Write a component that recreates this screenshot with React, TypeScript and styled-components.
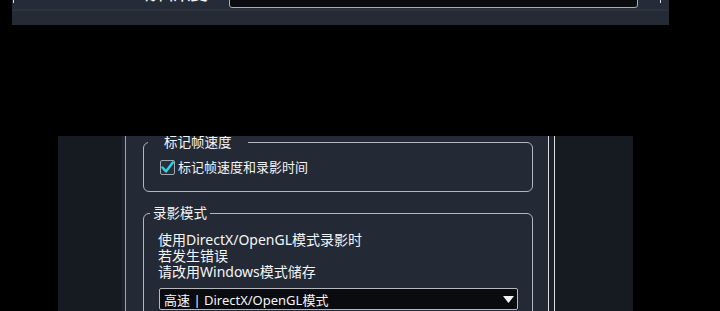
import React from "react";
import styled, { createGlobalStyle } from "styled-components";

const GlobalStyle = createGlobalStyle`
  html, body { margin: 0; padding: 0; background: #000; overflow: hidden; }
  #root { height: 311px; overflow: hidden; }
  * { box-sizing: border-box; }
`;

const FONT = `"Noto Sans", "Noto Sans CJK SC", sans-serif`;

const Page = styled.div`
  width: 720px;
  height: 311px;
  background: #000;
  font-family: ${FONT};
  color: #f1f3f5;
`;

const TopPanel = styled.div`
  margin-left: 12px;
  width: 657px;
  height: 25px;
  background: linear-gradient(#262c37 0 9px, #2c323d 9px 11px, #252b35 11px 100%);
  overflow: hidden;
`;

const TopFrame = styled.div`
  margin: 0 8px 0 1px;
  height: 100%;
  border-left: 1px solid #d6dae0;
  border-right: 1px solid #d6dae0;
`;

const TopRow = styled.div`
  display: flex;
  align-items: center;
  gap: 21px;
  height: 30px;
  margin-top: -22px;
  padding-left: 129px;
`;

const TopLabel = styled.div`
  width: 65px;
  font-size: 21px;
  line-height: 24px;
  text-align: right;
  color: #f4f6f8;
  margin-top: -4px;
`;

const TopInput = styled.div`
  width: 409px;
  height: 30px;
  background: #0a0c0f;
  border: 1px solid #a9aeb5;
  border-radius: 3px;
  font-size: 15px;
  line-height: 20px;
  padding: 0 0 0 10px;
  color: #e8e8e8;
  white-space: pre;
`;

const Bottom = styled.div`
  display: flex;
  margin: 111px 0 0 58px;
  width: 575px;
  height: 175px;
`;

const SideStrip = styled.div<{ $w: number }>`
  width: ${(p) => p.$w}px;
  flex: none;
  background: #161b22;
`;

const LeftEdge = styled.div`
  width: 3px;
  flex: none;
  background: #1d2430;
`;

const Content = styled.div`
  width: 423px;
  flex: none;
  background: #232935;
  border-left: 1px solid #9aa1a9;
  overflow: hidden;
  padding: 0 15px 0 17px;
`;

const Divider = styled.div`
  width: 7px;
  flex: none;
  background: #1a1f28;
  border-left: 1px solid #d9dde2;
  border-right: 1px solid #d9dde2;
`;

const Group = styled.fieldset<{ $pl: number; $mt: number; $pb: number }>`
  margin: ${(p) => p.$mt}px 0 0 0;
  padding: 0 14px ${(p) => p.$pb}px ${(p) => p.$pl}px;
  border: 1px solid #b1b7bf;
  border-radius: 6px;
  min-width: 0;
`;

const Legend = styled.legend<{ $ml: number; $px: number }>`
  margin-left: ${(p) => p.$ml}px;
  padding: 0 ${(p) => p.$px}px;
  font-size: 13.5px;
  line-height: 16px;
  height: 16px;
  color: #f3f5f7;
`;

const CheckRow = styled.label`
  display: flex;
  align-items: center;
  gap: 3px;
  margin-top: 9px;
  height: 16px;
  font-size: 13px;
  line-height: 16px;
`;

const Box = styled.span`
  width: 15px;
  height: 15px;
  flex: none;
  border: 1px solid #a2a8b0;
  border-radius: 2px;
  background: #2a303a;
  display: flex;
  align-items: center;
  justify-content: center;
`;

const Notes = styled.div`
  margin-top: 11px;
  font-size: 14px;
  line-height: 16px;
  color: #f4f6f8;
`;

const Select = styled.div`
  display: flex;
  align-items: center;
  justify-content: space-between;
  margin-top: 8px;
  margin-left: 1px;
  width: 359px;
  height: 22px;
  background: #090b0e;
  border: 1px solid #b4b9c0;
  border-radius: 2px;
  padding: 0 3px 0 4px;
  font-size: 13px;
  color: #f4f6f8;
`;

export default function App() {
  return (
    <Page>
      <GlobalStyle />
      <TopPanel>
        <TopFrame>
          <TopRow>
            <TopLabel>解析度</TopLabel>
            <TopInput>{"1920x1080 | (1920x1080 推荐)"}</TopInput>
          </TopRow>
        </TopFrame>
      </TopPanel>
      <Bottom>
        <SideStrip $w={64} />
        <LeftEdge />
        <Content>
          <Group $pl={16} $mt={-2} $pb={16}>
            <Legend $ml={-12} $px={16}>标记帧速度</Legend>
            <CheckRow>
              <Box>
                <svg width="13" height="13" viewBox="0 0 13 13">
                  <path d="M1.5 6.5 L5 10.5 L11.8 1.5" fill="none" stroke="#31d2ea" strokeWidth="2.4" strokeLinecap="round" strokeLinejoin="round" />
                </svg>
              </Box>
              标记帧速度和录影时间
            </CheckRow>
          </Group>
          <Group $pl={14} $mt={13} $pb={16}>
            <Legend $ml={-8} $px={3}>录影模式</Legend>
            <Notes>
              使用DirectX/OpenGL模式录影时
              <br />
              若发生错误
              <br />
              请改用Windows模式储存
            </Notes>
            <Select>
              <span>高速 | DirectX/OpenGL模式</span>
              <svg width="11" height="7" viewBox="0 0 11 7">
                <path d="M0 0 H11 L5.5 7 Z" fill="#f4f5f6" />
              </svg>
            </Select>
          </Group>
        </Content>
        <Divider />
        <SideStrip $w={78} />
      </Bottom>
    </Page>
  );
}
